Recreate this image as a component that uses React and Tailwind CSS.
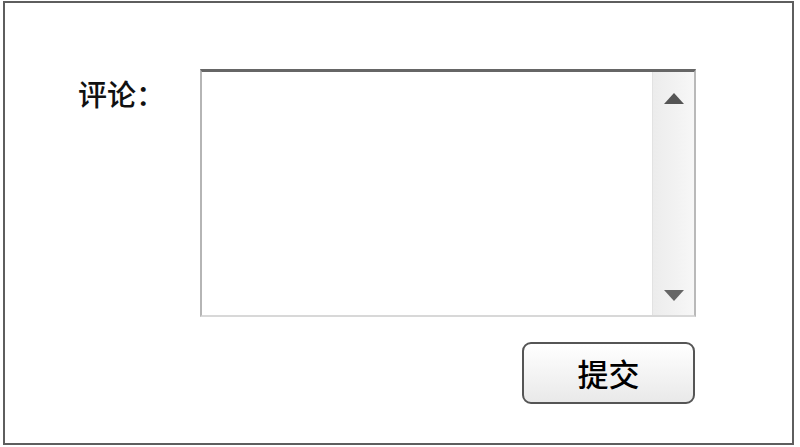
import React from 'react';

const font = { fontFamily: '"Liberation Sans", "Noto Sans CJK SC", sans-serif' };

const Scrollbar = () => (
  <div className="w-[42px] flex flex-col items-center justify-between bg-gradient-to-r from-[#ececec] to-[#f7f7f7] border-l border-[#e2e2e2] pt-[21px] pb-[14px]">
    <svg width="20" height="11" viewBox="0 0 20 11">
      <polygon points="10,0 20,11 0,11" fill="#555" />
    </svg>
    <svg width="20" height="11" viewBox="0 0 20 11">
      <polygon points="0,0 20,0 10,11" fill="#666" />
    </svg>
  </div>
);

export default function App() {
  return (
    <div className="w-[800px] h-[447px] bg-white pt-px pl-[3px]" style={font}>
      <div className="w-[791px] h-[444px] border-[2.5px] border-[#5e5e5e] pl-[73px] pt-[66px]">
        <div className="flex">
          <label className="w-[122px] mt-[10px] text-[29px] leading-[34px] font-medium text-[#111]">评论：</label>
          <div className="flex flex-col items-end w-[496px]">
            <div className="w-full h-[248px] flex border-t-[3px] border-t-[#666] border-l-2 border-l-[#b5b5b5] border-r-2 border-r-[#b9b9b9] border-b-2 border-b-[#d8d8d8]">
              <textarea className="flex-1 resize-none outline-none bg-white" />
              <Scrollbar />
            </div>
            <button className="mt-[25px] mr-px w-[173px] h-[62px] pt-[4px] rounded-[9px] border-2 border-[#555] bg-gradient-to-b from-white to-[#e9e9e9] text-[31px] font-medium text-black leading-none">
              提交
            </button>
          </div>
        </div>
      </div>
    </div>
  );
}
